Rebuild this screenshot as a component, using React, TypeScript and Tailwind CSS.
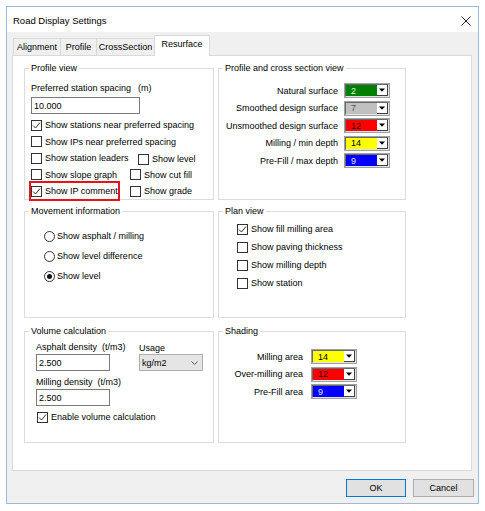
import React from "react";

type ComboProps = { bg: string; fg: string; value: string };

function Check({ checked = false, label }: { checked?: boolean; label: string }) {
  return (
    <div className="flex items-center h-full">
      <span className="w-[11px] h-[11px] border border-[#333333] bg-white flex items-center justify-center shrink-0">
        {checked && (
          <svg width="9" height="9" viewBox="0 0 9 9">
            <path d="M1 4.5 L3.5 7 L8 1.5" fill="none" stroke="#333333" strokeWidth="1" />
          </svg>
        )}
      </span>
      <span className="ml-[3px] whitespace-nowrap">{label}</span>
    </div>
  );
}

function Radio({ checked = false, label }: { checked?: boolean; label: string }) {
  return (
    <div className="flex items-center h-[20px]">
      <span className="w-[11px] h-[11px] rounded-full border border-[#333333] bg-white flex items-center justify-center shrink-0">
        {checked && <span className="w-[5px] h-[5px] rounded-full bg-[#111111]" />}
      </span>
      <span className="ml-[2px] whitespace-nowrap">{label}</span>
    </div>
  );
}

function ColorCombo({ bg, fg, value }: ComboProps) {
  return (
    <div className="w-[46px] h-[15px] border border-[#a0a0a0] shrink-0">
      <div className="h-full flex border border-t-[#696969] border-l-[#696969] border-r-[#e3e3e3] border-b-[#e3e3e3]">
        <div className={`flex-1 flex items-center pl-[5px] ${bg} ${fg}`}>{value}</div>
        <div className="w-[11px] bg-white border-r border-b border-[#404040] flex items-center justify-center">
          <svg width="6" height="4" viewBox="0 0 6 4">
            <path d="M0 0.5 H6 L3 3.8 Z" fill="#000000" />
          </svg>
        </div>
      </div>
    </div>
  );
}

function Group({ title, className, children }: { title: string; className: string; children: React.ReactNode }) {
  return (
    <div className={`relative border border-[#dcdcdc] ${className}`}>
      <span className="absolute left-[4px] -top-[7px] px-[2px] bg-white leading-[12px]">{title}</span>
      {children}
    </div>
  );
}

function TextBox({ value, w }: { value: string; w: string }) {
  return (
    <div className={`${w} h-[17px] border border-[#7a7a7a] bg-white flex items-center pl-[2px]`}>{value}</div>
  );
}

const profileColors: (ComboProps & { label: string })[] = [
  { label: "Natural surface", bg: "bg-[#008000]", fg: "text-[#d8ffd8]", value: "2" },
  { label: "Smoothed design surface", bg: "bg-[#c0c0c0]", fg: "text-[#555555]", value: "7" },
  { label: "Unsmoothed design surface", bg: "bg-[#ff0000]", fg: "text-[#200000]", value: "12" },
  { label: "Milling / min depth", bg: "bg-[#ffff00]", fg: "text-black", value: "14" },
  { label: "Pre-Fill / max depth", bg: "bg-[#0000ff]", fg: "text-[#e0e0ff]", value: "9" },
];

const shadingColors: (ComboProps & { label: string })[] = [
  { label: "Milling area", bg: "bg-[#ffff00]", fg: "text-black", value: "14" },
  { label: "Over-milling area", bg: "bg-[#ff0000]", fg: "text-[#200000]", value: "12" },
  { label: "Pre-Fill area", bg: "bg-[#0000ff]", fg: "text-[#e0e0ff]", value: "9" },
];

export default function App() {
  return (
    <div className="w-[485px] h-[511px] bg-white p-[6px] font-['Liberation_Sans',Arial,sans-serif] text-[9px] leading-[12px] text-black">
      <div className="w-[473px] h-[498px] border border-[#9dbbd9] flex flex-col">
        {/* title bar */}
        <div className="h-[25px] bg-white flex items-center justify-between pl-[6px] pr-[7px] shrink-0">
          <span className="text-[9.5px] pt-[3px]">Road Display Settings</span>
          <svg width="10" height="10" viewBox="0 0 10 10" className="mt-[2px]">
            <path d="M0.5 0.5 L9.5 9.5 M9.5 0.5 L0.5 9.5" stroke="#222222" strokeWidth="1" />
          </svg>
        </div>

        <div className="flex-1 bg-[#f0f0f0] flex flex-col pl-[5px] pr-[4px]">
          {/* tabs */}
          <div className="flex items-end h-[23px] pt-[4px] pl-[1px]">
            <div className="h-[17px] w-[48px] border border-b-0 border-[#d9d9d9] bg-[#f0f0f0] flex items-center justify-center">Alignment</div>
            <div className="h-[17px] w-[37px] -ml-px border border-b-0 border-[#d9d9d9] bg-[#f0f0f0] flex items-center justify-center">Profile</div>
            <div className="h-[17px] w-[59px] -ml-px border border-b-0 border-[#d9d9d9] bg-[#f0f0f0] flex items-center justify-center">CrossSection</div>
            <div className="h-[21px] w-[56px] -ml-px border border-b-0 border-[#d9d9d9] bg-white flex items-start pt-[2px] justify-center relative top-px z-10">Resurface</div>
          </div>

          {/* panel */}
          <div className="w-[460px] h-[416px] border border-[#d9d9d9] bg-white pl-[11px] pt-[12px] flex gap-[4px]">
            {/* left column */}
            <div className="w-[190px] flex flex-col">
              <Group title="Profile view" className="h-[132px] pl-[6px] pt-[13px]">
                <div className="flex">
                  <span className="w-[107px]">Preferred station spacing</span>
                  <span>(m)</span>
                </div>
                <div className="mt-[3px]">
                  <TextBox value="10.000" w="w-[109px]" />
                </div>
                <div className="mt-[3px] h-[16.5px]">
                  <Check checked label="Show stations near preferred spacing" />
                </div>
                <div className="h-[16.5px]">
                  <Check label="Show IPs near preferred spacing" />
                </div>
                <div className="h-[16.5px] flex">
                  <div className="w-[107px]">
                    <Check label="Show station leaders" />
                  </div>
                  <div className="pt-[2px]">
                    <Check label="Show level" />
                  </div>
                </div>
                <div className="h-[16.5px] flex">
                  <div className="w-[99px]">
                    <Check label="Show slope graph" />
                  </div>
                  <Check label="Show cut fill" />
                </div>
                <div className="h-[16px] flex">
                  <div className="w-[87px] h-[16px] outline-2 outline-[#e3151a]">
                    <Check checked label="Show IP comment" />
                  </div>
                  <div className="ml-[12px]">
                    <Check label="Show grade" />
                  </div>
                </div>
              </Group>

              <Group title="Movement information" className="h-[107px] mt-[11px] pl-[19px] pt-[14px]">
                <Radio label="Show asphalt / milling" />
                <Radio label="Show level difference" />
                <Radio checked label="Show level" />
              </Group>

              <Group title="Volume calculation" className="h-[112px] mt-[13px] pl-[11px] pt-[9px]">
                <div className="flex">
                  <div className="w-[103px]">
                    <div className="h-[12px]">Asphalt density&nbsp;&nbsp;(t/m3)</div>
                    <div className="mt-[1px]">
                      <TextBox value="2.500" w="w-[74px]" />
                    </div>
                  </div>
                  <div>
                    <div className="h-[12px] pt-[1px]">Usage</div>
                    <div className="mt-[1px] w-[64px] h-[17px] border border-[#adadad] bg-[#e5e5e5] flex items-center justify-between pl-[2px] pr-[4px]">
                      <span>kg/m2</span>
                      <svg width="7" height="4" viewBox="0 0 7 4">
                        <path d="M0.5 0.5 L3.5 3.5 L6.5 0.5" fill="none" stroke="#555555" strokeWidth="1" />
                      </svg>
                    </div>
                  </div>
                </div>
                <div className="mt-[5px] h-[12px]">Milling density&nbsp;&nbsp;(t/m3)</div>
                <div className="mt-[1px]">
                  <TextBox value="2.500" w="w-[74px]" />
                </div>
                <div className="mt-[3px] h-[16px] ml-[1px]">
                  <Check checked label="Enable volume calculation" />
                </div>
              </Group>
            </div>

            {/* right column */}
            <div className="w-[188px] flex flex-col">
              <Group title="Profile and cross section view" className="h-[132px] pt-[13px] pr-[15px]">
                {profileColors.map((c) => (
                  <div key={c.label} className="h-[17.5px] flex items-center justify-end gap-[6px]">
                    <span className="whitespace-nowrap">{c.label}</span>
                    <ColorCombo bg={c.bg} fg={c.fg} value={c.value} />
                  </div>
                ))}
              </Group>

              <Group title="Plan view" className="h-[107px] mt-[11px] pl-[18px] pt-[8px]">
                <div className="h-[18px]">
                  <Check checked label="Show fill milling area" />
                </div>
                <div className="h-[18px]">
                  <Check label="Show paving thickness" />
                </div>
                <div className="h-[18px]">
                  <Check label="Show milling depth" />
                </div>
                <div className="h-[18px]">
                  <Check label="Show station" />
                </div>
              </Group>

              <Group title="Shading" className="h-[112px] mt-[13px] pt-[16px] pr-[48px]">
                {shadingColors.map((c) => (
                  <div key={c.label} className="h-[17.5px] flex items-center justify-end gap-[8px]">
                    <span className="whitespace-nowrap">{c.label}</span>
                    <ColorCombo bg={c.bg} fg={c.fg} value={c.value} />
                  </div>
                ))}
              </Group>
            </div>
          </div>

          {/* buttons */}
          <div className="flex justify-end gap-[7px] mt-[8px]">
            <button className="w-[60px] h-[18px] border border-[#0078d7] bg-[#e1e1e1] leading-[12px]">OK</button>
            <button className="w-[61px] h-[18px] border border-[#adadad] bg-[#e1e1e1] leading-[12px]">Cancel</button>
          </div>
        </div>
      </div>
    </div>
  );
}
